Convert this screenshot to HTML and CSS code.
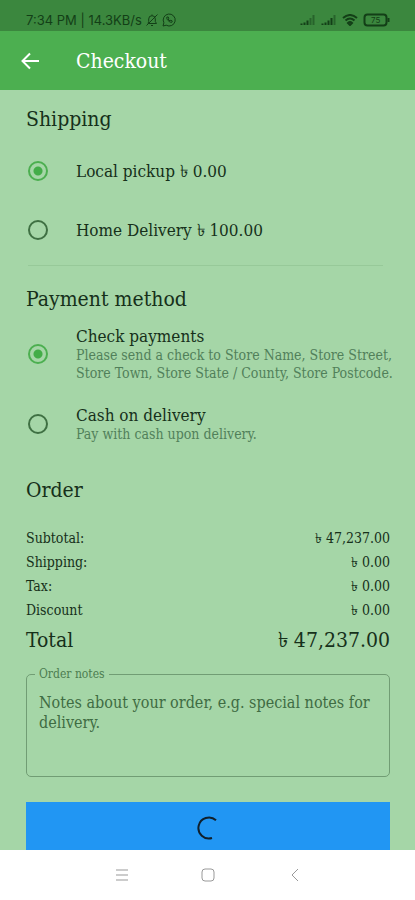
FILE: index.html
```html
<!DOCTYPE html>
<html lang="en">
<head>
<meta charset="utf-8">
<meta name="viewport" content="width=device-width, initial-scale=1">
<title>Checkout</title>
<link rel="stylesheet" href="styles.css">
</head>
<body>
<div class="status">
  <div class="status-group">
    <span>7:34 PM | 14.3KB/s</span>
    <svg class="status-icon" viewBox="0 0 14 14" aria-hidden="true"><path d="M3 10.500h8.500l-1.200-2V6a3.300 3.300 0 0 0-6.600 0v2.500zM6 12.500h2M7 2.500v-1M1.500 12.500l11-11"/></svg>
    <svg class="status-icon" viewBox="0 0 14 14" aria-hidden="true"><path d="M1 13l.9-3.200A6 6 0 1 1 4.200 12.200zM4.800 4.200c-.6 2 2.600 5.300 4.900 5.200l.6-1.400-1.500-.8-.8.7c-.8-.4-1.500-1.100-1.800-1.900l.6-.7-.7-1.400z"/></svg>
  </div>
  <div class="status-group status-right">
    <svg class="signal" viewBox="0 0 16 12" aria-hidden="true"><path d="M1.500 11v-1.500M4.500 11V8.500M7.500 11V6.500"/><path class="faint" d="M10.500 11V4M13.500 11V1"/></svg>
    <svg class="signal" viewBox="0 0 16 12" aria-hidden="true"><path d="M1.500 11v-1.500M4.500 11V8.500M7.500 11V6.500M10.500 11V4"/><path class="faint" d="M13.500 11V1"/></svg>
    <svg class="signal" viewBox="0 0 16 12" aria-hidden="true"><path d="M1 4q7-6 14 0M3.500 6.500q4.500-4 9 0M6 9q2-2 4 0L8 11z"/></svg>
    <svg class="battery" viewBox="0 0 28 14" aria-hidden="true"><rect x="1.500" y="1.500" width="22" height="11" rx="3"/><path d="M25.500 5v4"/><text x="8" y="10">75</text></svg>
  </div>
</div>
<header class="appbar">
  <button class="back" type="button" aria-label="Back"><svg viewBox="0 0 20 20"><path d="M19 10H2.500M10 2.500L2.500 10l7.500 7.500"/></svg></button>
  <h1>Checkout</h1>
</header>
<main>
  <form>
    <section class="shipping" aria-labelledby="shipping">
      <h2 id="shipping">Shipping</h2>
      <label class="option"><input type="radio" name="ship" checked><span class="name">Local pickup ৳ 0.00</span></label>
      <label class="option"><input type="radio" name="ship"><span class="name">Home Delivery ৳ 100.00</span></label>
    </section>
    <hr>
    <section class="payment" aria-labelledby="payment">
      <h2 id="payment">Payment method</h2>
      <label class="option pay"><input type="radio" name="pay" checked><span class="text"><span class="name">Check payments</span><span class="hint">Please send a check to Store Name, Store Street, Store Town, Store State / County, Store Postcode.</span></span></label>
      <label class="option pay"><input type="radio" name="pay"><span class="text"><span class="name">Cash on delivery</span><span class="hint">Pay with cash upon delivery.</span></span></label>
    </section>
    <section class="order" aria-labelledby="order">
      <h2 id="order">Order</h2>
      <table>
        <tbody>
          <tr><th scope="row">Subtotal:</th><td>৳ 47,237.00</td></tr>
          <tr><th scope="row">Shipping:</th><td>৳ 0.00</td></tr>
          <tr><th scope="row">Tax:</th><td>৳ 0.00</td></tr>
          <tr><th scope="row">Discount</th><td>৳ 0.00</td></tr>
        </tbody>
        <tfoot><tr><th scope="row">Total</th><td>৳ 47,237.00</td></tr></tfoot>
      </table>
    </section>
    <fieldset>
      <legend><label for="notes">Order notes</label></legend>
      <textarea id="notes" placeholder="Notes about your order, e.g. special notes for delivery."></textarea>
    </fieldset>
    <button class="submit" type="button" aria-label="Placing order"><svg viewBox="0 0 24 24"><path d="M20 4.200A10.500 10.500 0 1 0 16 22"/></svg></button>
  </form>
</main>
<nav>
  <button type="button" aria-label="Recent apps"><svg viewBox="0 0 16 16"><path d="M2 3h12M2 8h12M2 13h12"/></svg></button>
  <button type="button" aria-label="Home"><svg viewBox="0 0 16 16"><rect x="2" y="2" width="12" height="12" rx="3"/></svg></button>
  <button type="button" aria-label="Back"><svg viewBox="0 0 16 16"><path d="M11 2L5 8l6 6"/></svg></button>
</nav>
</body>
</html>
```
FILE: styles.css
```css
* { box-sizing: border-box; }
body {
  margin: 0;
  height: 100vh;
  display: flex;
  flex-direction: column;
  overflow: hidden;
  background: #a5d6a7;
  color: #16301a;
  font-family: "DejaVu Serif Condensed", "Liberation Serif", serif;
}
svg { fill: none; stroke: currentColor; display: block; }
button { border: 0; padding: 0; background: none; color: inherit; font: inherit; }
.status {
  flex: none;
  height: 31px;
  padding: 8px 24px 0 26px;
  display: flex;
  justify-content: space-between;
  align-items: center;
  background: #3b873e;
  color: #133f17;
  font: 13px/16px Inter, sans-serif;
}
.status-group { display: flex; align-items: center; gap: 3px; }
.status-right { gap: 5px; }
.status-icon { width: 14px; height: 14px; }
.signal { width: 16px; height: 12px; stroke-width: 2; }
.faint { opacity: .5; }
.battery { width: 28px; height: 14px; stroke-width: 2; }
.battery text { font: 8px Inter, sans-serif; fill: currentColor; stroke: none; }
.appbar {
  flex: none;
  height: 59px;
  padding: 0 20px;
  display: flex;
  align-items: center;
  gap: 36px;
  background: #4caf50;
  color: #fff;
}
.back { width: 20px; height: 20px; }
.back svg { width: 20px; height: 20px; stroke-width: 2; }
h1, h2 { margin: 0; font-weight: 400; font-size: 21px; line-height: 28px; }
main { flex: 1; min-height: 0; overflow: hidden; padding: 15px 25px 0 26px; }
.option { display: flex; align-items: center; gap: 28px; height: 59px; padding-left: 2px; }
.shipping { padding-bottom: 6px; }
.shipping h2 { margin-bottom: 8px; }
input {
  appearance: none;
  flex: none;
  width: 20px;
  height: 20px;
  margin: 0;
  border: 2px solid #3f7043;
  border-radius: 50%;
}
input:checked {
  border-color: #4caf50;
  background: radial-gradient(circle, #43ad48 0 4px, transparent 5px);
}
hr { margin: 0 7px 0 2px; border: 0; border-top: 1px solid #97c999; }
.payment { padding-top: 19px; }
.payment h2 { margin-bottom: 6px; }
.name { font-size: 17px; line-height: 20px; }
.pay { height: 70px; margin-right: -10px; }
.pay .text { display: flex; flex-direction: column; }
.hint { font-size: 14px; line-height: 18px; color: #51805a; }
.order { padding-top: 17px; }
table { width: 100%; margin-top: 22px; border-collapse: collapse; font-size: 14px; }
th, td { padding: 0; font-weight: 400; text-align: left; height: 24px; line-height: 24px; }
td { text-align: right; }
tfoot th, tfoot td { font-size: 21px; height: 36px; line-height: 36px; }
fieldset {
  margin: 9px 0 25px;
  padding: 0 12px;
  min-width: 0;
  border: 1px solid #719d74;
  border-radius: 5px;
  color: #4c7c50;
}
legend { padding: 0 4px; margin-left: -4px; font-size: 12px; line-height: 14px; }
textarea {
  display: block;
  width: 100%;
  height: 95px;
  padding: 12px 0;
  border: 0;
  resize: none;
  outline: 0;
  background: none;
  color: inherit;
  font: 16px/20px "DejaVu Serif Condensed", "Liberation Serif", serif;
}
textarea::placeholder { color: #3f6c43; opacity: 1; }
.submit { display: grid; place-items: center; width: 100%; height: 52px; background: #2196f3; color: #10202c; }
.submit svg { width: 24px; height: 24px; stroke-width: 2; }
nav {
  flex: none;
  height: 50px;
  padding: 0 77px 0 79px;
  display: flex;
  justify-content: space-around;
  align-items: center;
  background: #fff;
  color: #999;
}
nav svg { width: 16px; height: 16px; }
```
